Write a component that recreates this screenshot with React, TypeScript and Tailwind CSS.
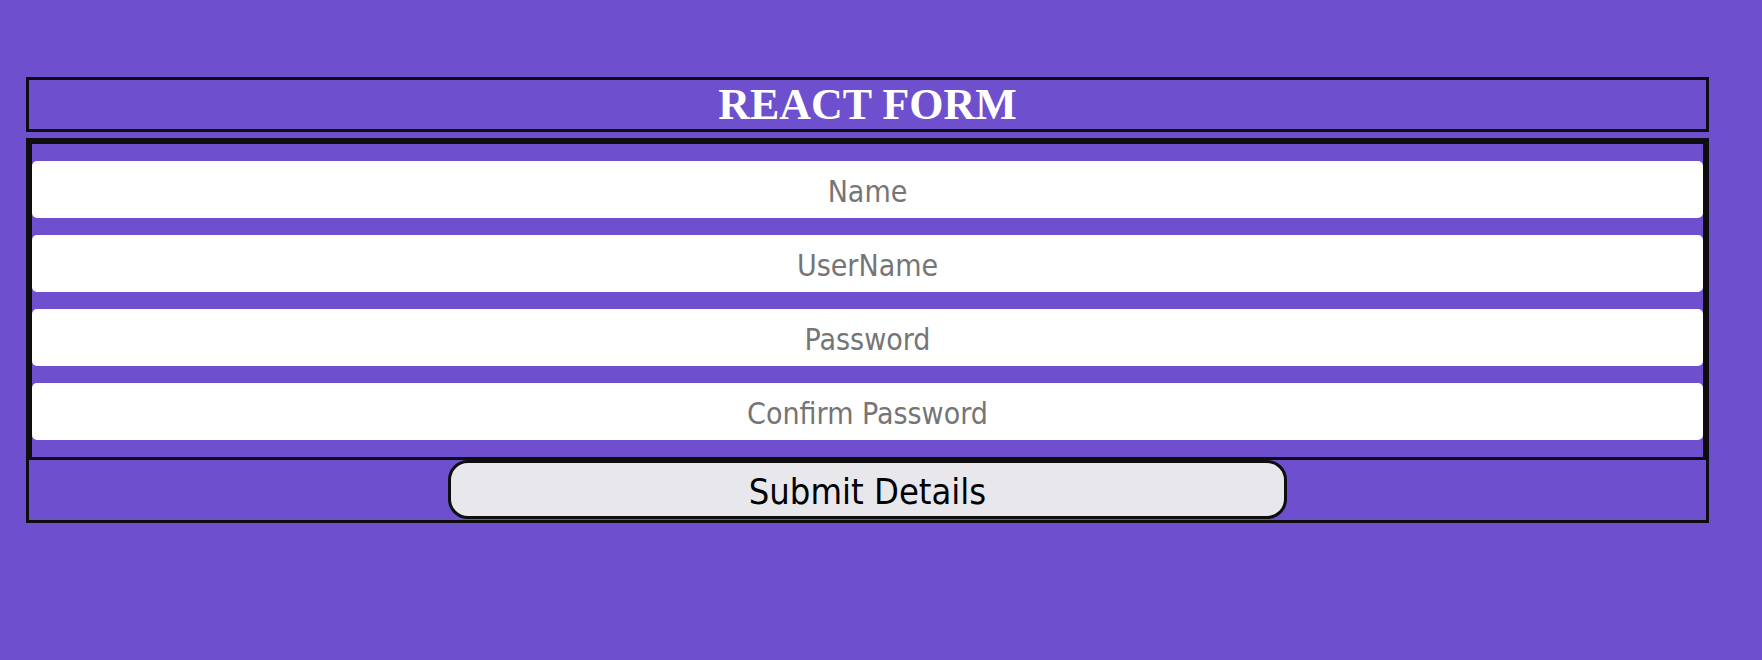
import React, { useState } from 'react';

const fields = [
  { name: 'name', placeholder: 'Name', type: 'text' },
  { name: 'username', placeholder: 'UserName', type: 'text' },
  { name: 'password', placeholder: 'Password', type: 'password' },
  { name: 'confirm', placeholder: 'Confirm Password', type: 'password' },
];

const App: React.FC = () => {
  const [values, setValues] = useState<Record<string, string>>({});

  return (
    <div className="min-h-[660px] w-full bg-[#6e4fcd] pt-[77px] pl-[26px]">
      {/* Title */}
      <div className="flex h-[55px] w-[1683px] items-center justify-center border-[3px] border-[#0e0e0e]">
        <h1 className="font-['Liberation_Serif','Times_New_Roman',serif] text-[44px] font-bold leading-none text-white">
          REACT FORM
        </h1>
      </div>

      <form
        onSubmit={(e) => e.preventDefault()}
        className="mt-[6px] w-[1683px] border-[3px] border-[#0e0e0e]"
      >
        <div className="flex flex-col gap-[17px] border-[3px] border-[#0e0e0e] py-[17px]">
          {fields.map((f) => (
            <input
              key={f.name}
              type={f.type}
              placeholder={f.placeholder}
              value={values[f.name] ?? ''}
              onChange={(e) => setValues({ ...values, [f.name]: e.target.value })}
              className="h-[57px] w-full rounded-[5px] bg-white pt-[4px] text-center font-['DejaVu_Sans',sans-serif] text-[30px] [font-stretch:condensed] text-black outline-none placeholder:text-[#757575]"
            />
          ))}
        </div>

        <div className="flex justify-center pb-[1px]">
          <button
            type="submit"
            className="h-[59px] w-1/2 rounded-[20px] border-[3px] border-[#0e0e0e] bg-[#e8e7ec] pt-[4px] font-['DejaVu_Sans',sans-serif] text-[36px] [font-stretch:condensed] leading-none text-black"
          >
            Submit Details
          </button>
        </div>
      </form>
    </div>
  );
};

export default App;
